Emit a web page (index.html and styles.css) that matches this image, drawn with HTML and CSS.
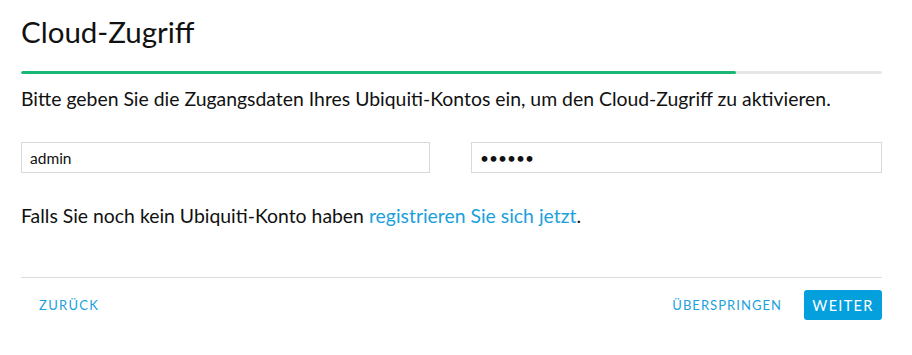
FILE: index.html
```html
<!DOCTYPE html>
<html lang="de">
<head>
<meta charset="utf-8">
<title>Cloud-Zugriff</title>
<link rel="stylesheet" href="styles.css">
</head>
<body>
<div class="wizard">
  <h1 class="title">Cloud-Zugriff</h1>
  <div class="progress"><div class="progress-fill" style="width: 83%"></div></div>
  <p class="intro">Bitte geben Sie die Zugangsdaten Ihres Ubiquiti-Kontos ein, um den Cloud-Zugriff zu aktivieren.</p>
  <div class="fields">
    <input class="field" type="text" value="admin">
    <input class="field" type="password" value="secret">
  </div>
  <p class="note">Falls Sie noch kein Ubiquiti-Konto haben <a class="link" href="#">registrieren Sie sich jetzt</a>.</p>
  <div class="footer">
    <button class="btn-text back">ZURÜCK</button>
    <div class="footer-right">
      <button class="btn-text">ÜBERSPRINGEN</button>
      <button class="btn-primary">WEITER</button>
    </div>
  </div>
</div>
</body>
</html>
```
FILE: styles.css
```css
* { box-sizing: border-box; }
html, body { margin: 0; background: #fff; }
body { font-family: Lato, "Open Sans", sans-serif; color: #111; }
.wizard { width: 861px; margin-left: 21px; padding-top: 12px; }
.title { font-size: 29.5px; font-weight: 400; margin: 0; line-height: 40px; color: #111; }
.progress { margin-top: 19px; height: 3px; border-radius: 2px; background: #e6e6e6; overflow: hidden; }
.progress-fill { height: 100%; background: #19b874; border-radius: 2px; }
.intro { margin: 12px 0 0; font-size: 19.4px; line-height: 26px; }
.fields { display: grid; grid-template-columns: 409px 411px; column-gap: 41px; margin-top: 30px; }
.field { height: 31px; border: 1px solid #d9d9d9; padding: 0 8px; font-family: Lato, sans-serif; font-size: 15.5px; color: #111; outline: none; }
.note { margin: 30px 0 0; font-size: 19.4px; line-height: 26px; }
.link { color: #1aa1dd; text-decoration: none; }
.footer { margin-top: 48px; border-top: 1px solid #dcdcdc; padding-top: 12px; display: flex; justify-content: space-between; align-items: center; }
.footer-right { display: flex; align-items: center; gap: 22px; }
.btn-text { background: none; border: 0; padding: 0; font-family: Lato, sans-serif; font-size: 13px; letter-spacing: 1.05px; color: #1aa1dd; cursor: pointer; height: 30px; }
.back { margin-left: 18px; letter-spacing: 1.3px; }
.btn-primary { background: #03a0dd; color: #fff; border: 0; border-radius: 3px; width: 78px; height: 30px; font-family: Lato, sans-serif; font-size: 14.5px; letter-spacing: 1.3px; cursor: pointer; }
```
